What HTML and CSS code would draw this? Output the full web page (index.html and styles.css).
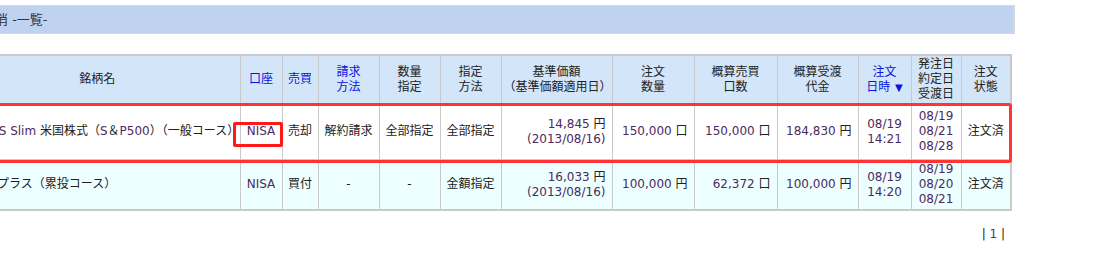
FILE: index.html
```html
<!DOCTYPE html>
<html lang="ja">
<head>
<meta charset="utf-8">
<title>注文照会・取消 一覧</title>
<link rel="stylesheet" href="styles.css">
</head>
<body>
<div class="title-band"><h2 class="title">消 -一覧-</h2></div>

<div class="orders">
  <table class="grid">
    <colgroup>
      <col style="width:286px"><col style="width:42px"><col style="width:36px"><col style="width:61px"><col style="width:61px"><col style="width:61px"><col style="width:111px"><col style="width:82px"><col style="width:83px"><col style="width:81px"><col style="width:53px"><col style="width:50px"><col style="width:50px">
    </colgroup>
    <thead>
      <tr>
        <th>銘柄名</th>
        <th><a class="sort">口座</a></th>
        <th><a class="sort">売買</a></th>
        <th><a class="sort">請求<br>方法</a></th>
        <th>数量<br>指定</th>
        <th>指定<br>方法</th>
        <th>基準価額<br>（基準価額適用日）</th>
        <th>注文<br>数量</th>
        <th>概算売買<br>口数</th>
        <th>概算受渡<br>代金</th>
        <th><a class="sort">注文<br>日時 <span class="arrow">▼</span></a></th>
        <th>発注日<br>約定日<br>受渡日</th>
        <th>注文<br>状態</th>
      </tr>
    </thead>
    <tbody>
      <tr class="row-first">
        <td class="name"><span class="v">eMAXIS Slim</span> 米国株式（<span class="v">S</span>＆<span class="v">P500</span>）（一般コース）</td>
        <td class="c"><span class="v">NISA</span></td>
        <td class="c">売却</td>
        <td class="c">解約請求</td>
        <td class="c">全部指定</td>
        <td class="c">全部指定</td>
        <td class="r"><span class="v">14,845</span> 円<br><span class="v">(2013/08/16)</span></td>
        <td class="r"><span class="v">150,000</span> 口</td>
        <td class="r"><span class="v">150,000</span> 口</td>
        <td class="r"><span class="v">184,830</span> 円</td>
        <td class="c"><span class="v">08/19<br>14:21</span></td>
        <td class="c"><span class="v">08/19<br>08/21<br>08/28</span></td>
        <td class="c">注文済</td>
      </tr>
      <tr class="row-second">
        <td class="name">ひふみプラス（累投コース）</td>
        <td class="c"><span class="v">NISA</span></td>
        <td class="c">買付</td>
        <td class="c">-</td>
        <td class="c">-</td>
        <td class="c">金額指定</td>
        <td class="r"><span class="v">16,033</span> 円<br><span class="v">(2013/08/16)</span></td>
        <td class="r"><span class="v">100,000</span> 円</td>
        <td class="r"><span class="v">62,372</span> 口</td>
        <td class="r"><span class="v">100,000</span> 円</td>
        <td class="c"><span class="v">08/19<br>14:20</span></td>
        <td class="c"><span class="v">08/19<br>08/20<br>08/21</span></td>
        <td class="c">注文済</td>
      </tr>
    </tbody>
  </table>
  <div class="mark-row"></div>
  <div class="mark-nisa"></div>
</div>

<div class="pager">| <span class="page">1</span> |</div>
</body>
</html>
```

FILE: styles.css
```css
html, body {
  margin: 0;
  padding: 0;
  background: #ffffff;
  overflow: hidden;
}

body {
  font-family: "DejaVu Sans", "Noto Sans CJK JP", sans-serif;
  font-size: 12px;
  line-height: 15px;
  color: #222222;
}

.title-band {
  margin-top: 5px;
  width: 1013px;
  height: 27px;
  background: #bfd3f0;
  border: 1px solid #d6d8de;
  border-left: none;
  border-right: 2px solid #d6d8de;
  display: flex;
  align-items: center;
}

.title {
  margin: 0 0 0 -5px;
  font-size: 13px;
  font-weight: normal;
  color: #333333;
  line-height: 16px;
}

.orders {
  position: relative;
  margin-top: 20px;
}

.grid {
  margin-left: -47px;
  width: 1057px;
  table-layout: fixed;
  border-collapse: collapse;
  border: 2px solid #c9c9c9;
}

.grid th,
.grid td {
  border: 1px solid #c9c9c9;
  vertical-align: middle;
  overflow: hidden;
  white-space: nowrap;
}

.grid th {
  background: #d3e5f8;
  font-weight: normal;
  text-align: center;
  padding: 1px 2px;
  height: 45px;
}

.sort {
  color: #0a14e0;
  text-decoration: none;
}

.arrow {
  font-size: 10px;
  margin-left: 1px;
}

.row-first td {
  background: #ffffff;
  padding: 5px 0;
  height: 45px;
}

.row-second td {
  background: #eeffff;
  padding: 2px 0;
  height: 45px;
}

.grid td.name {
  text-align: left;
  padding-left: 6px;
}

.grid td.c {
  text-align: center;
}

.grid td.r {
  text-align: right;
  padding-right: 6px;
}

.v {
  color: #4c2a5e;
}

.mark-row {
  position: absolute;
  left: -10px;
  top: 49px;
  width: 1022px;
  height: 60px;
  box-sizing: border-box;
  border: 3px solid #ff3535;
  border-radius: 3px;
}

.mark-nisa {
  position: absolute;
  left: 233px;
  top: 68px;
  width: 50px;
  height: 25px;
  box-sizing: border-box;
  border: 3px solid #ff1a1a;
  border-radius: 2px;
}

.pager {
  width: 1005px;
  margin-top: 16px;
  text-align: right;
  color: #222222;
}

.page {
  color: #3b3a8e;
}
```
